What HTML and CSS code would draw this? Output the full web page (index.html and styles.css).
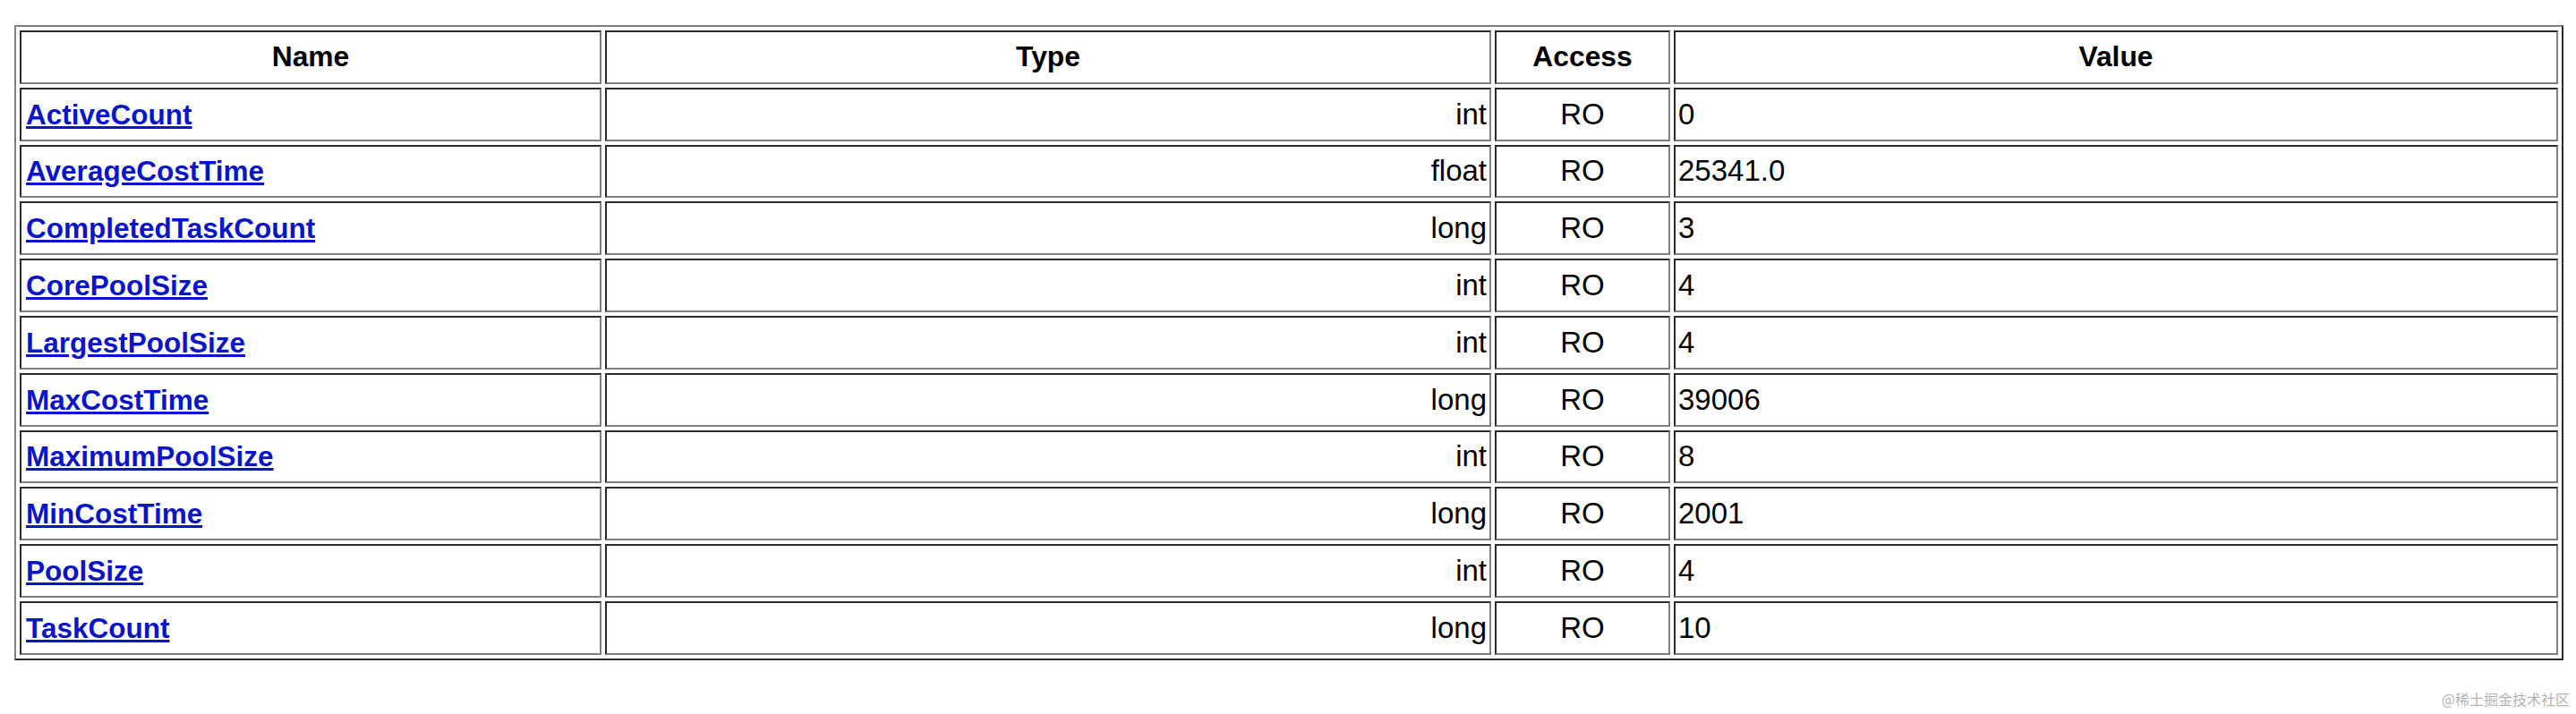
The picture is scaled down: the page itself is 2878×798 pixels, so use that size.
FILE: index.html
```html
<!DOCTYPE html>
<html lang="en">
<head>
<meta charset="utf-8">
<title>MBean Attributes</title>
<link rel="stylesheet" href="styles.css">
</head>
<body>
<table class="attrs">
  <colgroup>
    <col class="c-name">
    <col class="c-type">
    <col class="c-access">
    <col class="c-value">
  </colgroup>
  <thead>
    <tr><th>Name</th><th>Type</th><th>Access</th><th>Value</th></tr>
  </thead>
  <tbody>
    <tr><td class="name"><a href="#">ActiveCount</a></td><td class="type">int</td><td class="acc">RO</td><td>0</td></tr>
    <tr><td class="name"><a href="#">AverageCostTime</a></td><td class="type">float</td><td class="acc">RO</td><td>25341.0</td></tr>
    <tr><td class="name"><a href="#">CompletedTaskCount</a></td><td class="type">long</td><td class="acc">RO</td><td>3</td></tr>
    <tr><td class="name"><a href="#">CorePoolSize</a></td><td class="type">int</td><td class="acc">RO</td><td>4</td></tr>
    <tr><td class="name"><a href="#">LargestPoolSize</a></td><td class="type">int</td><td class="acc">RO</td><td>4</td></tr>
    <tr><td class="name"><a href="#">MaxCostTime</a></td><td class="type">long</td><td class="acc">RO</td><td>39006</td></tr>
    <tr><td class="name"><a href="#">MaximumPoolSize</a></td><td class="type">int</td><td class="acc">RO</td><td>8</td></tr>
    <tr><td class="name"><a href="#">MinCostTime</a></td><td class="type">long</td><td class="acc">RO</td><td>2001</td></tr>
    <tr><td class="name"><a href="#">PoolSize</a></td><td class="type">int</td><td class="acc">RO</td><td>4</td></tr>
    <tr><td class="name"><a href="#">TaskCount</a></td><td class="type">long</td><td class="acc">RO</td><td>10</td></tr>
  </tbody>
</table>
<div class="watermark">@稀土掘金技术社区</div>
</body>
</html>
```
FILE: styles.css
```css
html, body {
  margin: 0;
  padding: 0;
  background: #ffffff;
}
body {
  position: relative;
  width: 2878px;
  height: 798px;
  overflow: hidden;
  font-family: "Liberation Sans", Arial, Helvetica, sans-serif;
  font-size: 33px;
  color: #000;
}
.attrs {
  margin: 28px 0 0 16px;
  width: 2848px;
  table-layout: fixed;
  border-collapse: separate;
  border-spacing: 4px;
  border-style: solid;
  border-width: 2px;
  border-color: #808080 #2b2b2b #2b2b2b #808080;
}
.c-name { width: 650px; }
.c-type { width: 990px; }
.c-access { width: 196px; }
.c-value { width: 988px; }
.attrs tr { height: 59.8px; }
.attrs th,
.attrs td {
  border-style: solid;
  border-width: 2px;
  border-color: #2b2b2b #808080 #808080 #2b2b2b;
  padding: 0 3px;
  vertical-align: middle;
  white-space: nowrap;
  overflow: hidden;
}
.attrs th {
  font-weight: bold;
  font-size: 31.8px;
  text-align: center;
}
.attrs td { text-align: left; }
.attrs td.name { padding-left: 5px; }
.attrs td.type { text-align: right; }
.attrs td.acc { text-align: center; }
.attrs a {
  color: #0a14c8;
  font-weight: bold;
  font-size: 31.5px;
  text-decoration: underline;
}
.watermark {
  position: absolute;
  right: 7px;
  top: 771px;
  font-family: "Noto Sans CJK SC", sans-serif;
  font-size: 16px;
  line-height: 21px;
  color: #b4b4b4;
}
```
